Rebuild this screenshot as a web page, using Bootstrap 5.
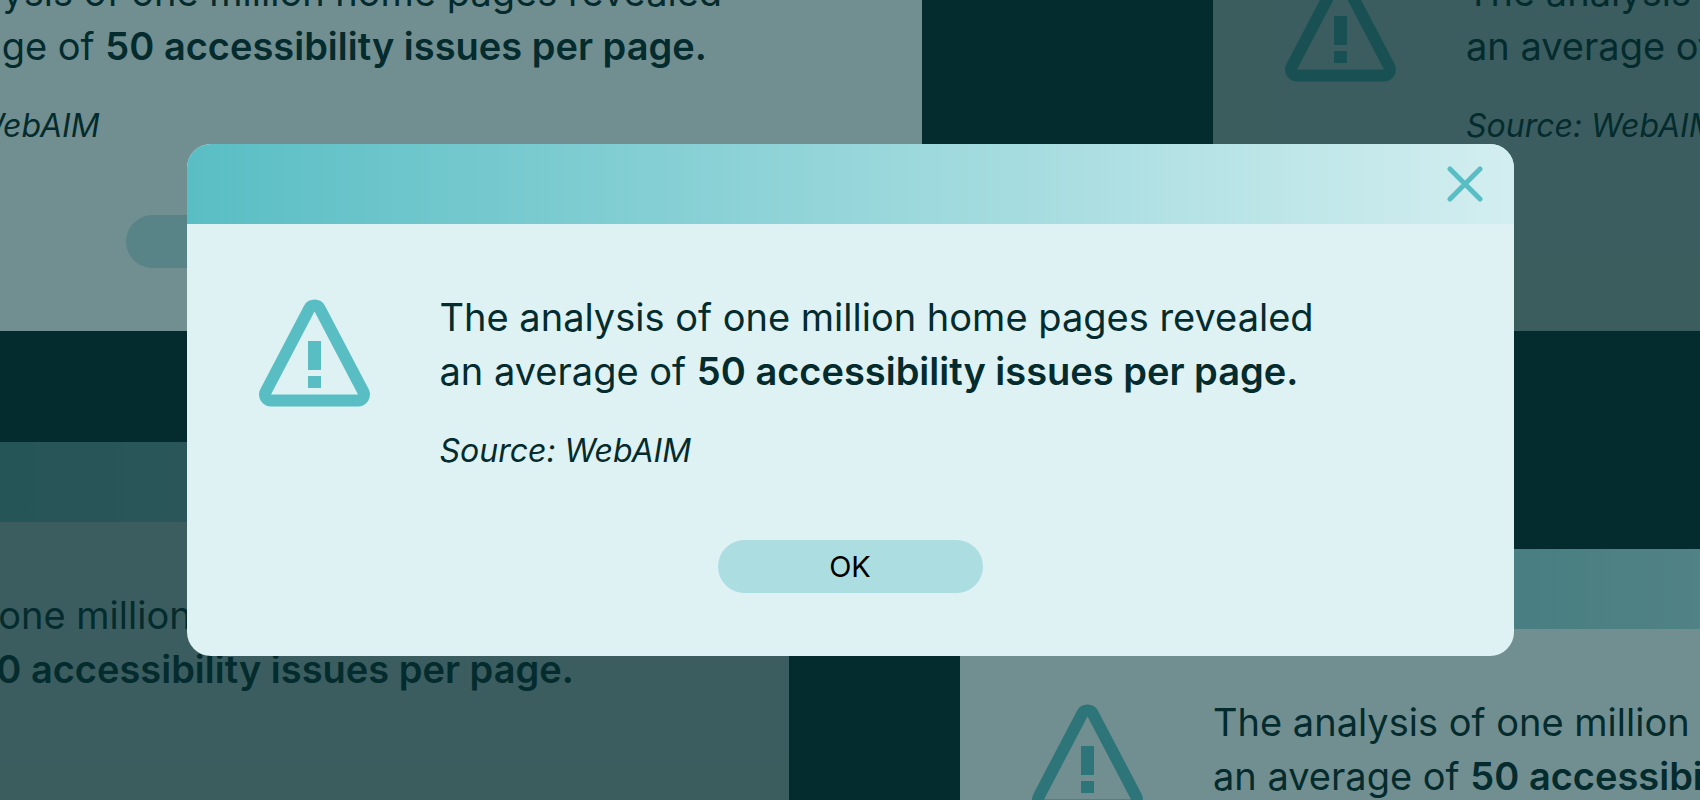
<!DOCTYPE html>
<html lang="en">
<head>
<meta charset="utf-8">
<meta name="viewport" content="width=device-width, initial-scale=1">
<title>Accessibility alert</title>
<link href="https://cdn.jsdelivr.net/npm/bootstrap@5.3.0/dist/css/bootstrap.min.css" rel="stylesheet">
<style>
  :root { --ink: #042b2d; --teal: #59bec4; --pane: #def2f4; }
  body { background: var(--ink); color: var(--ink); font-family: Inter, "Liberation Sans", sans-serif; }
  .desk { min-height: 100vh; }
  .popup { width: 1327px; border-radius: 24px; background: var(--pane); overflow: hidden; }
  .popup-front { max-width: calc(100% - 32px); }
  .popup-bar { height: 80px; padding: 0 31px; background: linear-gradient(90deg, var(--teal), #d3eef0); }
  .popup-body { padding: 66px 72px 63px; }
  .popup-content { gap: 70px; margin-bottom: 69px; }
  .warn-icon { width: 111px; height: 108px; margin-top: 9px; fill: var(--teal); }
  .message { font-size: 38px; line-height: 54px; margin-bottom: 33px; }
  .message strong { font-weight: 600; }
  .source { font-size: 32px; line-height: 40px; }
  .close-btn svg { width: 36px; height: 36px; stroke: var(--teal); }
  .ok-btn, .ok-btn:hover { width: 265px; height: 53px; background: #acdde1; color: #000; font-size: 29px; line-height: 40px; }
  /* windows scattered behind the front one, placed from the middle of the desk */
  .ghost { position: absolute; opacity: .5; }
  .ghost-faint { opacity: .25; }
  .ghost-nw { right: calc(50% - 72px); bottom: calc(50% + 69px); }
  .ghost-ne { left: calc(50% + 363px); bottom: calc(50% + 69px); }
  .ghost-sw { right: calc(50% + 61px); top: calc(50% + 42px); }
  .ghost-se { left: calc(50% + 110px); top: calc(50% + 149px); }
</style>
</head>
<body>
<svg class="d-none" xmlns="http://www.w3.org/2000/svg">
  <symbol id="warn" viewBox="0 0 111 108">
    <path fill-rule="evenodd" d="M1.4 89.9 44.9 6.9A12 12 0 0 1 66.1 6.9L109.6 89.9A12 12 0 0 1 99 107.5H12A12 12 0 0 1 1.4 89.9ZM12 95.5H99L55.5 12.5Z"/>
    <path d="M49 42h13v29H49zM49 77h13v12H49z"/>
  </symbol>
  <symbol id="cross" viewBox="0 0 36 36">
    <path d="M3 3 33 33M33 3 3 33" fill="none" stroke-width="5" stroke-linecap="round"/>
  </symbol>
</svg>

<main class="desk position-relative overflow-hidden d-flex align-items-center justify-content-center">
  <section class="popup popup-front position-relative z-1" role="dialog" aria-label="Accessibility alert">
    <header class="popup-bar d-flex align-items-center justify-content-end">
      <button type="button" class="close-btn btn p-0 border-0 d-flex" aria-label="Close"><svg><use href="#cross"/></svg></button>
    </header>
    <div class="popup-body">
      <div class="popup-content d-flex align-items-start">
        <svg class="warn-icon flex-shrink-0" aria-hidden="true"><use href="#warn"/></svg>
        <div>
          <p class="message">The analysis of one million home pages revealed<br>an average of <strong>50 accessibility issues per page.</strong></p>
          <p class="source mb-0 fst-italic">Source: WebAIM</p>
        </div>
      </div>
      <div class="text-center"><button type="button" class="ok-btn btn rounded-pill border-0">OK</button></div>
    </div>
  </section>
</main>

<script src="https://cdn.jsdelivr.net/npm/bootstrap@5.3.0/dist/js/bootstrap.bundle.min.js"></script>
<script>
  // The windows behind are inert copies of the front one.
  const front = document.querySelector('.popup-front');
  ['ghost-nw', 'ghost-ne ghost-faint', 'ghost-sw ghost-faint', 'ghost-se'].forEach(place => {
    const copy = front.cloneNode(true);
    copy.className = 'popup ghost ' + place;
    copy.removeAttribute('role');
    copy.setAttribute('aria-hidden', 'true');
    copy.inert = true;
    front.before(copy);
  });
</script>
</body>
</html>
